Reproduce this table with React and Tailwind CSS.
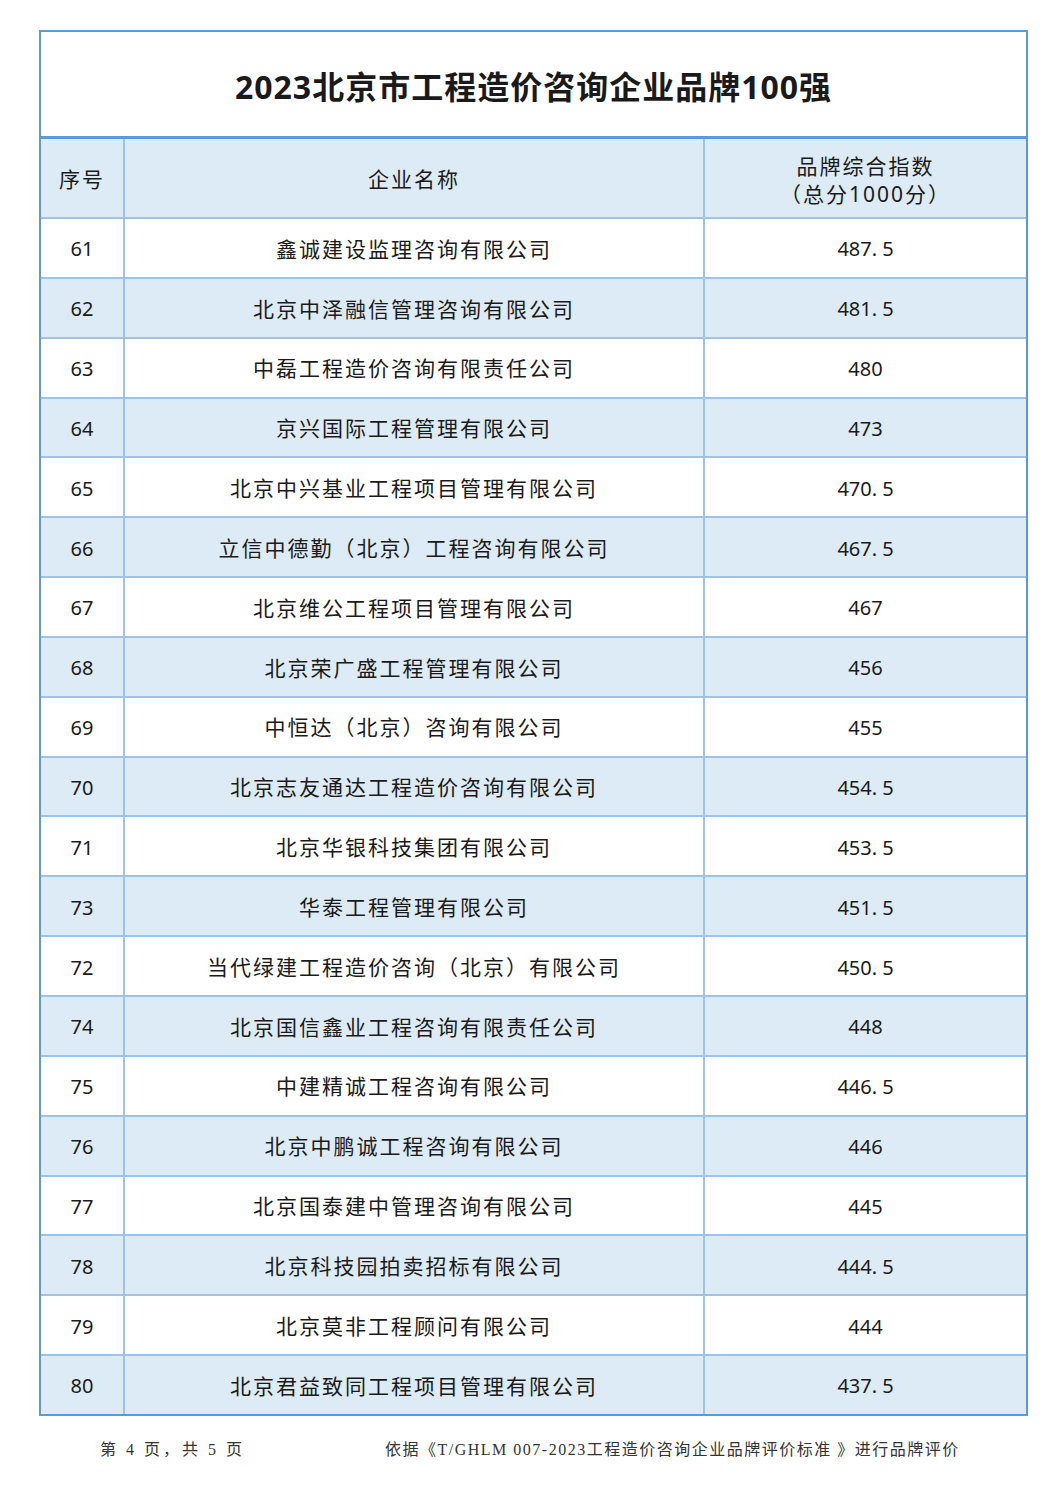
import React from 'react';

const rows = [
    ['61', '鑫诚建设监理咨询有限公司', '487.5'],
    ['62', '北京中泽融信管理咨询有限公司', '481.5'],
    ['63', '中磊工程造价咨询有限责任公司', '480'],
    ['64', '京兴国际工程管理有限公司', '473'],
    ['65', '北京中兴基业工程项目管理有限公司', '470.5'],
    ['66', '立信中德勤（北京）工程咨询有限公司', '467.5'],
    ['67', '北京维公工程项目管理有限公司', '467'],
    ['68', '北京荣广盛工程管理有限公司', '456'],
    ['69', '中恒达（北京）咨询有限公司', '455'],
    ['70', '北京志友通达工程造价咨询有限公司', '454.5'],
    ['71', '北京华银科技集团有限公司', '453.5'],
    ['73', '华泰工程管理有限公司', '451.5'],
    ['72', '当代绿建工程造价咨询（北京）有限公司', '450.5'],
    ['74', '北京国信鑫业工程咨询有限责任公司', '448'],
    ['75', '中建精诚工程咨询有限公司', '446.5'],
    ['76', '北京中鹏诚工程咨询有限公司', '446'],
    ['77', '北京国泰建中管理咨询有限公司', '445'],
    ['78', '北京科技园拍卖招标有限公司', '444.5'],
    ['79', '北京莫非工程顾问有限公司', '444'],
    ['80', '北京君益致同工程项目管理有限公司', '437.5'],
];

const sans = "font-['Noto_Sans','Noto_Sans_CJK_SC',sans-serif]";

// 数字里的小数点后面留一点空
const Score = ({ value }) => {
    const [int, dec] = value.split('.');
    return (
        <span>
            {int}
            {dec !== undefined && (
                <>
                    .<span className="ml-[5px]">{dec}</span>
                </>
            )}
        </span>
    );
};

const App = () => {
    return (
        <div className={`w-[1061px] h-[1500px] bg-white text-[#1a1a1a] ${sans}`}>
            <div className="pt-[30px] pl-[39px]">
                <div className="w-[989px] border-2 border-[#5b9bd5]">
                    {/* Title */}
                    <div className="h-[107px] flex items-center justify-center pt-[6px] border-b-[3px] border-[#5b9bd5]">
                        <h1 className="text-[32px] font-bold tracking-[1px] leading-none">
                            2023北京市工程造价咨询企业品牌100强
                        </h1>
                    </div>

                    {/* Header */}
                    <div className="grid grid-cols-[84px_580px_1fr] h-[78px] bg-[#ddebf7] text-[21px]">
                        <div className="flex items-center justify-center border-r-2 border-[#9dc3e6] tracking-[2px] pt-[3px]">序号</div>
                        <div className="flex items-center justify-center border-r-2 border-[#9dc3e6] tracking-[2px] pt-[3px]">企业名称</div>
                        <div className="flex flex-col items-center justify-center leading-[28px] tracking-[2px] pt-[3px]">
                            <div>品牌综合指数</div>
                            <div>（总分1000分）</div>
                        </div>
                    </div>

                    {/* Rows */}
                    {rows.map(([no, name, score], i) => (
                        <div
                            key={no}
                            className={`grid grid-cols-[84px_580px_1fr] h-[59.85px] border-t-2 border-[#9dc3e6] text-[20px] ${i % 2 === 1 ? 'bg-[#ddebf7]' : 'bg-white'}`}
                        >
                            <div className="flex items-center justify-center border-r-2 border-[#9dc3e6] pt-[3px]">{no}</div>
                            <div className="flex items-center justify-center border-r-2 border-[#9dc3e6] text-[21px] tracking-[2px] pt-[3px]">{name}</div>
                            <div className="flex items-center justify-center pt-[3px]">
                                <Score value={score} />
                            </div>
                        </div>
                    ))}
                </div>
            </div>

            {/* Footer */}
            <div className="flex pt-[22px] text-[16px] text-[#333] font-['Liberation_Serif','Noto_Sans_CJK_SC',serif]">
                <div className="w-[385px] pl-[100px] tracking-[3px]">第 4 页，共 5 页</div>
                <div className="tracking-[1.5px]">依据《T/GHLM 007-2023工程造价咨询企业品牌评价标准 》进行品牌评价</div>
            </div>
        </div>
    );
};

export default App;
